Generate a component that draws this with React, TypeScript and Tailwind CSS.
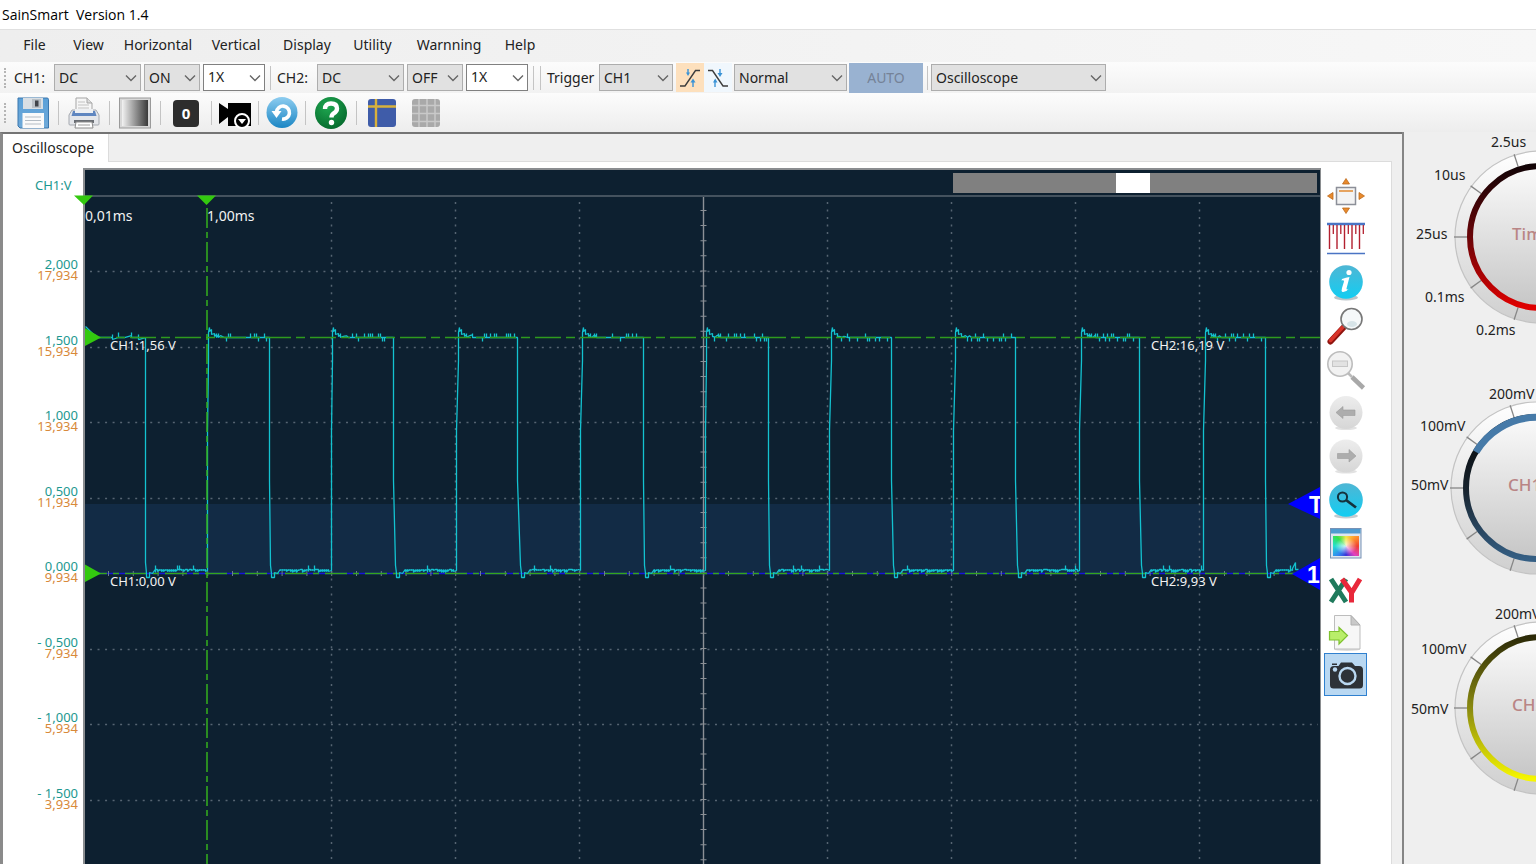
import React from 'react';

const MENU = [
  { label: 'File', width: 'w-[47px]' },
  { label: 'View', width: 'w-[61px]' },
  { label: 'Horizontal', width: 'w-[78px]' },
  { label: 'Vertical', width: 'w-[78px]' },
  { label: 'Display', width: 'w-[64px]' },
  { label: 'Utility', width: 'w-[67px]' },
  { label: 'Warnning', width: 'w-[86px]' },
  { label: 'Help', width: 'w-[56px]' },
];

// ---- toolbar parts ----

const Grip: React.FC = () => (
  <div className="mr-2 h-5 w-0 shrink-0 border-l-2 border-dotted border-[#b5b5b5]"></div>
);

const Separator: React.FC = () => <div className="h-6 w-px shrink-0 bg-[#c4c4c4]"></div>;

interface ComboProps {
  label: string;
  value: string;
  width: string;
  light?: boolean;
}

const Combo: React.FC<ComboProps> = ({ label, value, width, light }) => (
  <div className={`relative h-[27px] shrink-0 ${width}`}>
    <select
      aria-label={label}
      className={`h-full w-full appearance-none border pl-1 text-sm leading-5 text-[#222] ${
        light ? 'border-[#808080] bg-white pb-0.5' : 'border-[#adadad] bg-[#e1e1e1]'
      }`}
    >
      <option>{value}</option>
    </select>
    <svg className="pointer-events-none absolute top-2.5 right-1 h-2 w-3" viewBox="0 0 12 8" fill="none">
      <path d="M1 1.5 L6 6.5 L11 1.5" stroke="#666" strokeWidth="1.4" />
    </svg>
  </div>
);

const SlopeUpIcon: React.FC = () => (
  <svg className="h-6 w-6" viewBox="0 0 24 24" fill="none">
    <path d="M2 20 H7 L17.500 4.500 H22" stroke="#3d3d3d" strokeWidth="1.400" />
    <path d="M10 3 V8 M15 14 V21" stroke="#3a93d6" strokeWidth="1.400" />
    <path d="M8 6.500 H12 L10 10 Z M12.500 16.500 H17.500 L15 12.500 Z" fill="#3a93d6" />
  </svg>
);

const SlopeDownIcon: React.FC = () => (
  <svg className="h-6 w-6" viewBox="0 0 24 24" fill="none">
    <path d="M2 4.500 H6.500 L17 20 H22" stroke="#3d3d3d" strokeWidth="1.400" />
    <path d="M14 3 V8 M9 14 V21" stroke="#3a93d6" strokeWidth="1.400" />
    <path d="M11.500 7 H16.500 L14 11 Z M7 16.500 H11.500 L9.200 12.500 Z" fill="#3a93d6" />
  </svg>
);

const SaveIcon: React.FC = () => (
  <svg className="h-8 w-8" viewBox="0 0 32 32">
    <defs>
      <linearGradient id="save" x1="0" y1="0" x2="0" y2="1">
        <stop offset="0" stopColor="#5aa0d8" />
        <stop offset="1" stopColor="#6fa9d8" />
      </linearGradient>
    </defs>
    <path d="M1 1 H30 Q31.500 1 31.500 2.500 V31 H3 L1 29 Z" fill="url(#save)" stroke="#3a76ad" strokeWidth="1" />
    <rect x="6" y="1" width="20" height="11" fill="#d9dfe4" />
    <rect x="15" y="2" width="9" height="9" fill="#b9c0c6" />
    <rect x="18" y="3.500" width="3.500" height="6" fill="#40444a" />
    <rect x="5.500" y="16" width="21.500" height="15" fill="#fafafa" />
    <path d="M8 20 H24 M8 23.500 H24 M8 27 H24" stroke="#b4bcc4" strokeWidth="1.200" />
  </svg>
);

const PrintIcon: React.FC = () => (
  <svg className="h-8 w-8" viewBox="0 0 32 32">
    <path d="M8 15 V1 H19 L24 6 V15 Z" fill="#f6f6f6" stroke="#a5a5a5" />
    <path d="M10 5 H17 M10 8 H21 M10 11 H21" stroke="#c2c2c2" />
    <path d="M19 1 V6 H24" fill="#dcdcdc" stroke="#a5a5a5" />
    <path d="M4 13 H28 L31 18 V27 Q31 28 30 28 H2 Q1 28 1 27 V18 Z" fill="#e4e6ea" stroke="#a4a8af" />
    <path d="M5 14 H27 L28.500 19 H3.500 Z" fill="#5f86c0" />
    <path d="M7 16 H25 V12 H7 Z" fill="#eef0f3" />
    <rect x="6" y="23" width="20" height="3" fill="#6a6e74" />
    <path d="M8 25 H24 L25 31 H7 Z" fill="#fff" stroke="#8c8c8c" />
    <path d="M10 28 H22" stroke="#9c9c9c" />
  </svg>
);

const GradientIcon: React.FC = () => (
  <svg className="h-8 w-8" viewBox="0 0 32 32">
    <defs>
      <linearGradient id="grey">
        <stop offset="0" stopColor="#f2f2f2" />
        <stop offset="1" stopColor="#3a3a3a" />
      </linearGradient>
    </defs>
    <rect x="0.500" y="1" width="31" height="30" fill="#d8d8d8" stroke="#9a9a9a" />
    <rect x="3" y="3" width="26" height="26" fill="url(#grey)" />
  </svg>
);

const ZeroIcon: React.FC = () => (
  <svg className="h-8 w-8" viewBox="0 0 32 32">
    <rect x="3" y="3" width="26" height="27" rx="4" fill="#2d2d2d" />
    <text x="16" y="22" textAnchor="middle" fontSize="15" fontWeight="700" fill="#fff" fontFamily="Noto Sans, sans-serif">
      0
    </text>
  </svg>
);

const VideoIcon: React.FC = () => (
  <svg className="h-8 w-8" viewBox="0 0 32 32">
    <path d="M0 6 L9 12 V6 H32 V29 H9 V20 L0 27 Z" fill="#000" />
    <circle cx="23" cy="24" r="7" fill="#000" stroke="#fff" strokeWidth="2" />
    <path d="M19 22 H27 L23 27 Z" fill="#fff" />
  </svg>
);

const UndoIcon: React.FC = () => (
  <svg className="h-8 w-8" viewBox="0 0 32 32">
    <defs>
      <linearGradient id="undo" x1="0" y1="0" x2="0" y2="1">
        <stop offset="0" stopColor="#8ecdf0" />
        <stop offset="1" stopColor="#1b86c4" />
      </linearGradient>
    </defs>
    <circle cx="16" cy="15.500" r="15.500" fill="url(#undo)" />
    <path d="M10.500 15 A6.500 6.500 0 1 1 16 22" fill="none" stroke="#fff" strokeWidth="3.600" />
    <path d="M5.500 14 H15.500 L10.500 21 Z" fill="#fff" />
  </svg>
);

const HelpIcon: React.FC = () => (
  <svg className="h-8 w-8" viewBox="0 0 32 32">
    <defs>
      <radialGradient id="help" cx="0.4" cy="0.3" r="0.8">
        <stop offset="0" stopColor="#1fa851" />
        <stop offset="1" stopColor="#04652a" />
      </radialGradient>
    </defs>
    <circle cx="16" cy="16" r="16" fill="url(#help)" />
    <path
      d="M10 12 Q10 6.500 16 6.500 Q22 6.500 22 11.500 Q22 14.500 18.500 16.500 Q16.500 17.800 16.500 20.500"
      fill="none"
      stroke="#fff"
      strokeWidth="4.400"
    />
    <circle cx="16.500" cy="25.500" r="2.700" fill="#fff" />
  </svg>
);

const CursorGridIcon: React.FC = () => (
  <svg className="h-8 w-8" viewBox="0 0 32 32">
    <rect x="2" y="2" width="28" height="28" rx="3" fill="#3f5ca9" />
    <path d="M2 9.500 H30 M10 2 V30" stroke="#d8b13c" strokeWidth="2.400" />
  </svg>
);

const GreyGridIcon: React.FC = () => (
  <svg className="h-8 w-8" viewBox="0 0 32 32">
    <rect x="2" y="2" width="28" height="28" rx="3" fill="#a9a9a9" />
    <path d="M2 8.500 H30 M2 16.500 H30 M2 24.500 H30 M9 2 V30 M17 2 V30 M25 2 V30" stroke="#c9c9c9" strokeWidth="1.500" />
  </svg>
);

const TOOLS: { name: string; icon: React.ReactNode; margin: string; sep: boolean }[] = [
  { name: 'Save', icon: <SaveIcon />, margin: 'ml-[3px] mr-[9px]', sep: true },
  { name: 'Print', icon: <PrintIcon />, margin: 'mx-[9px]', sep: true },
  { name: 'Background', icon: <GradientIcon />, margin: 'mx-[9px]', sep: true },
  { name: 'Zero', icon: <ZeroIcon />, margin: 'mx-[9px]', sep: true },
  { name: 'Record', icon: <VideoIcon />, margin: 'mx-[7px]', sep: true },
  { name: 'Undo', icon: <UndoIcon />, margin: 'mx-[7px]', sep: true },
  { name: 'Help topics', icon: <HelpIcon />, margin: 'mx-[9px]', sep: true },
  { name: 'Cursors', icon: <CursorGridIcon />, margin: 'mx-[9px]', sep: false },
  { name: 'Grid', icon: <GreyGridIcon />, margin: 'ml-[3px]', sep: false },
];

// ---- side tools, every icon is drawn on a 40x40 field ----

const SIDE_TOOLS: { name: string; art: React.ReactNode }[] = [
  {
    name: 'Fit',
    art: (
      <>
        <rect x="10.500" y="11.500" width="19" height="17" fill="#f3f3f3" stroke="#8c8f98" strokeWidth="1.500" />
        <path d="M13 15 H27" stroke="#e59a4e" strokeWidth="1.800" />
        <path
          d="M20 2.500 L23.500 8 H16.500 Z M20 37.500 L23.500 32 H16.500 Z M1.500 20 L7 16.500 V23.500 Z M38.500 20 L33 16.500 V23.500 Z"
          fill="#e88a2c"
          stroke="#bd6a1c"
          strokeWidth="0.800"
        />
      </>
    ),
  },
  {
    name: 'Ruler',
    art: (
      <>
        <path d="M1 4 H39" stroke="#4a74c4" strokeWidth="2.400" />
        <path d="M1 33.500 H39" stroke="#4a74c4" strokeWidth="1.400" />
        <path d="M3.500 5 V29 M11 5 V29 M18.500 5 V29 M26 5 V29 M33.500 5 V29" stroke="#b3202f" strokeWidth="1.400" />
        <path d="M7.300 5 V14 M14.800 5 V14 M22.300 5 V14 M29.800 5 V14 M37.300 5 V14" stroke="#b3202f" strokeWidth="1.300" />
      </>
    ),
  },
  {
    name: 'Info',
    art: (
      <>
        <ellipse cx="20" cy="34.500" rx="12" ry="3" fill="#bcc4c8" />
        <circle cx="20" cy="19" r="16.800" fill="url(#aqua)" />
        <circle cx="23" cy="9.500" r="2.600" fill="#fff" />
        <path
          d="M16 16 Q20 14.500 23.500 14 L20.500 25.500 Q20.500 27.500 23 25.500 Q20 29.500 16.500 29 Q15 28 16 25 L18 18.500 Q18 16.500 15.500 17.500 Z"
          fill="#fff"
        />
      </>
    ),
  },
  {
    name: 'Zoom in',
    art: (
      <>
        <path d="M17.500 20.500 L4.500 34.500" stroke="#8f1510" strokeWidth="6" strokeLinecap="round" />
        <path d="M16.500 20.500 L4.500 33.500" stroke="#d9342a" strokeWidth="3.500" strokeLinecap="round" />
        <circle cx="25.500" cy="12" r="10.500" fill="#f5f8f9" stroke="#777" strokeWidth="1.600" />
        <ellipse cx="26" cy="17" rx="5" ry="3" fill="#d7e4e8" />
      </>
    ),
  },
  {
    name: 'Zoom out',
    art: (
      <>
        <path d="M22 23 L26 27" stroke="#bbb" strokeWidth="2.500" />
        <path d="M26 27 L37.500 38" stroke="#a8a8a8" strokeWidth="4.500" />
        <circle cx="14" cy="14" r="12.200" fill="#f2f2f2" stroke="#bdbdbd" strokeWidth="1.600" />
        <rect x="6.500" y="11" width="15" height="5.500" fill="#e2e2e2" stroke="#c6c6c6" />
      </>
    ),
  },
  {
    name: 'Back',
    art: (
      <>
        <ellipse cx="20" cy="34" rx="11" ry="2" fill="#e2e2e2" />
        <circle cx="20" cy="18.500" r="16.500" fill="url(#disc)" />
        <path d="M10 18.500 L17 12.500 V16 H29 V21.500 H17 V24.500 Z" fill="#adadad" stroke="#9c9c9c" strokeWidth="0.600" />
      </>
    ),
  },
  {
    name: 'Forward',
    art: (
      <>
        <ellipse cx="20" cy="34.500" rx="11" ry="2" fill="#e2e2e2" />
        <circle cx="20" cy="19" r="16.500" fill="url(#disc)" />
        <path d="M30 19 L23 12.500 V16.500 H11.500 V21.500 H23 V25 Z" fill="#adadad" stroke="#9c9c9c" strokeWidth="0.600" />
      </>
    ),
  },
  {
    name: 'Search',
    art: (
      <>
        <ellipse cx="20" cy="35" rx="12" ry="2.500" fill="#c4ccd0" />
        <circle cx="20" cy="19" r="16.800" fill="url(#aqua)" />
        <circle cx="16.500" cy="16" r="4.600" fill="none" stroke="#15323c" strokeWidth="2" />
        <path d="M20 19 L30 26.500" stroke="#15323c" strokeWidth="2.800" />
      </>
    ),
  },
  {
    name: 'Colors',
    art: (
      <>
        <rect x="4.500" y="4.500" width="30.500" height="29.500" fill="#dfe6ef" stroke="#7792b5" />
        <rect x="5" y="5" width="29.500" height="4.500" fill="#4f9bd0" />
        <foreignObject x="7" y="12" width="26" height="20">
          <div className="h-5 w-[26px] bg-[radial-gradient(#ffffffcc,#ffffff00_60%),conic-gradient(#f6e84a,#ff9a2e,#f0402e,#e040c0,#3a35d8,#2f8cf0,#25e0d0,#35e04a,#f6e84a)]"></div>
        </foreignObject>
      </>
    ),
  },
  {
    name: 'XY mode',
    art: (
      <>
        <path d="M5 11 L20 34 M20 11 L5 34" stroke="#1f7a5c" strokeWidth="5" />
        <path d="M16 11 L26 25 M34 11 L25.500 25 M25.500 23 V34.500" fill="none" stroke="#e8283a" strokeWidth="5" />
      </>
    ),
  },
  {
    name: 'Export',
    art: (
      <>
        <ellipse cx="21" cy="38.500" rx="13" ry="1.500" fill="#dcdcdc" />
        <path d="M8.500 4.500 H25 L34 14 V38 H8.500 Z" fill="#f7f7f7" stroke="#bdbdbd" />
        <path d="M25 4.500 V14 H34 Z" fill="#c9c9c9" stroke="#b0b0b0" />
        <path d="M3.500 20.500 H13 V16.500 L21.500 24.500 L13 33 V29 H3.500 Z" fill="#b9ee6a" stroke="#7fc22f" strokeWidth="1.200" />
      </>
    ),
  },
  {
    name: 'Snapshot',
    art: (
      <>
        <path
          d="M8 11 H12.500 L15 7.500 H26 L29 11 H33 Q37 11 37 15 V30 Q37 33.500 33.500 33.500 H7.500 Q4 33.500 4 30 V15 Q4 11 8 11 Z"
          fill="#2d3238"
        />
        <path d="M6 8.500 H11 V10 H6 Z" fill="#2d3238" />
        <circle cx="9" cy="14.500" r="2.200" fill="#b9d8f2" />
        <circle cx="21.500" cy="21" r="8" fill="none" stroke="#b9d8f2" strokeWidth="2.400" />
      </>
    ),
  },
];

// ---- scope trace ----

// x of the low and the high end of each rising edge, then of each falling edge
const PULSES = [
  [207, 208, 269, 271],
  [331, 332, 393, 396],
  [456, 458, 517, 521],
  [580, 582, 643, 645],
  [705, 706, 768, 770],
  [829, 831, 891, 894],
  [953, 955, 1015, 1018],
  [1079, 1081, 1139, 1142],
  [1203, 1205, 1265, 1267],
];

const HIGH = 337;
const LOW = 570;

const noise = (n: number) => {
  const v = Math.sin(n * 12.9898) * 43758.5453;
  return v - Math.floor(v);
};

const highPart = (from: number, to: number) => {
  let d = `L${from} 332 L${from + 1} 327 V331 L${from + 3} 329 V334 L${from + 6} 333 V336`;
  for (let x = from + 8; x < to - 1; x += 2) {
    const n = noise(x);
    const y = x < from + 16 ? HIGH - 3 * n : HIGH;
    d += ` L${x} ${y}`;
    if (n > 0.76) d += ` V${HIGH - 4} V${HIGH}`;
    if (n < 0.2) d += ` V${HIGH + 4} V${HIGH}`;
  }
  return `${d} L${to} ${HIGH}`;
};

const lowPart = (from: number, to: number) => {
  let d = `L${from} 573 V577 H${from + 3} V572 L${from + 6} 573 L${from + 8} 570`;
  for (let x = from + 9; x < to - 1; x += 2) {
    d += ` L${x} 569 V${569 + Math.round(noise(x) * 3)}`;
    if (noise(x + 1) > 0.93) d += ' V565 V569';
  }
  return `${d} L${to} ${LOW}`;
};

const buildTrace = () => {
  let d = `M85 326 L92 333 L98 337 H112 V334 V339 L118 337 V332 V337 H124 L131 335 V332 V337 H138 V334 V339 L145 337 L145 562 ${lowPart(146, 207)}`;
  PULSES.forEach(([riseLow, riseHigh, fallHigh, fallLow], i) => {
    const next = PULSES[i + 1];
    d += ` L${riseLow} 430 L${riseHigh} 360 ${highPart(riseHigh, fallHigh)} L${fallHigh} 480 L${fallLow - 1} 565 `;
    d += lowPart(fallLow, next ? next[0] : 1292);
  });
  return `${d} V568 L1295 562 V569 H1298`;
};

const TRACE = buildTrace();

const ROWS = [
  { y: 271, ch1: '2,000', ch2: '17,934' },
  { y: 347, ch1: '1,500', ch2: '15,934' },
  { y: 422, ch1: '1,000', ch2: '13,934' },
  { y: 498, ch1: '0,500', ch2: '11,934' },
  { y: 573, ch1: '0,000', ch2: '9,934' },
  { y: 649, ch1: '- 0,500', ch2: '7,934' },
  { y: 724, ch1: '- 1,000', ch2: '5,934' },
  { y: 800, ch1: '- 1,500', ch2: '3,934' },
  { y: 875, ch1: '- 2,000', ch2: '1,934' },
];

const COLUMNS = [331, 455, 579, 827, 951, 1075, 1199];

const Scope: React.FC = () => (
  <svg
    className="block h-full w-full"
    viewBox="3 162 1318 702"
    preserveAspectRatio="xMinYMin slice"
    fontFamily="Noto Sans, sans-serif"
    fontSize="13"
  >
    <rect x="83" y="168" width="1238" height="700" fill="#8a8d90" />
    <rect x="85" y="170" width="1235" height="700" fill="#0d2030" />
    <rect x="85" y="504" width="1235" height="69" fill="#122b45" />

    <rect x="953" y="173" width="364" height="20" fill="#808080" />
    <rect x="1116" y="173" width="34" height="20" fill="#fff" />
    <path d="M85 196 H1320" stroke="#7c848c" />

    <g stroke="#566472" strokeWidth="1.500" strokeDasharray="2 5.530">
      {ROWS.filter((row) => row.y !== 573).map((row) => (
        <path key={row.y} d={`M90 ${row.y + 0.5} H1318`} />
      ))}
      {COLUMNS.map((x) => (
        <path key={x} d={`M${x + 0.5} 202 V868`} />
      ))}
    </g>

    <path d="M703.500 197 V868" stroke="#8b9096" strokeWidth="1.400" />
    <path d="M703.500 210 V868" stroke="#8b9096" strokeWidth="6" strokeDasharray="1 14.100" />

    <path d="M85 573.500 H1318" stroke="#1616d8" strokeWidth="1.500" />
    <path d="M108 573.500 H1318" stroke="#6d7f8c" strokeWidth="5" strokeDasharray="1 23.800" />
    <path d="M85 573.500 H1318" stroke="#35a51c" strokeWidth="1.500" strokeDasharray="22 6 6 6" />

    <path d={TRACE} transform="translate(0.5 0.5)" fill="none" stroke="#13c2d0" strokeWidth="1.300" strokeLinejoin="bevel" />
    <path d="M85 337.500 H1320" stroke="#2f9a1e" strokeWidth="1.300" strokeDasharray="26 5 9 5" />
    <path d="M207 208 V868" stroke="#35b01c" strokeWidth="1.500" strokeDasharray="20 4 6 4" />

    <g fill="#33c90f">
      <path d="M74 195.500 H93 L84 205 Z M197 195.500 H216 L206.500 205 Z" />
      <path d="M85 328 L101 337.500 L85 346 Z M85 564.500 L101 573.500 L85 582 Z" />
    </g>

    <path d="M1288 504 L1320 487 V519 Z M1292 574 L1320 558 V590 Z" fill="#0000ff" />
    <svg x="1288" y="480" width="32" height="120" viewBox="1288 480 32 120">
      <g fill="#fff" fontSize="23" fontWeight="700" fontFamily="Liberation Sans, sans-serif">
        <text x="1309" y="513">T</text>
        <text x="1307" y="583">1</text>
      </g>
    </svg>

    <g fill="#f2f2f2">
      <text x="85" y="221" fontSize="14">0,01ms</text>
      <text x="207" y="221" fontSize="14">1,00ms</text>
      <text x="110" y="350">CH1:1,56 V</text>
      <text x="110" y="586">CH1:0,00 V</text>
      <text x="1151" y="350">CH2:16,19 V</text>
      <text x="1151" y="586">CH2:9,93 V</text>
    </g>

    <text x="35" y="190" fill="#1c9890">CH1:V</text>
    <g textAnchor="end">
      {ROWS.map((row) => (
        <g key={row.ch1}>
          <text x="78" y={row.y - 2} fill="#1c9890">{row.ch1}</text>
          <text x="78" y={row.y + 9} fill="#d8893a">{row.ch2}</text>
        </g>
      ))}
    </g>
  </svg>
);

// ---- knobs ----

interface KnobProps {
  id: string;
  cx: number;
  title: string;
  stops: string[];
  labels: { text: string; x: number; y: number }[];
  split?: boolean;
}

const TICKS = [0, 36, 72, 108, 144, 180, 216, 252, 288, 324];

const Knob: React.FC<KnobProps> = ({ id, cx, title, stops, labels, split }) => (
  <svg className="block h-[215px] w-[220px] shrink-0" viewBox="0 5 220 215" fontFamily="Noto Sans, sans-serif" fontSize="14">
    <defs>
      <linearGradient id={`${id}-ring`} x1="0" y1="0" x2="0" y2="1">
        <stop offset="0" stopColor={stops[0]} />
        <stop offset="0.5" stopColor={stops[1]} />
        <stop offset="1" stopColor={stops[2]} />
      </linearGradient>
    </defs>
    <circle cx={cx} cy="110" r="86" fill="url(#rim)" stroke="#c3c3c3" strokeWidth="1.200" />
    {TICKS.map((a) => (
      <path key={a} d={`M${cx - 87} 110 h13`} transform={`rotate(${a} ${cx} 110)`} stroke="#868686" strokeWidth="1.300" />
    ))}
    <circle cx={cx} cy="110" r="71" fill="url(#face)" stroke={`url(#${id}-ring)`} strokeWidth="6" />
    {split && (
      <>
        <path d={`M${cx - 61} 74 A71 71 0 0 1 ${cx + 61} 74`} fill="none" stroke="#467aa8" strokeWidth="7" />
        <circle cx={cx + 6} cy="63" r="7" fill="#b5b8bb" />
      </>
    )}
    <text x={cx - 29} y="113" fontSize="17" fontWeight="500" fill="#b98585">{title}</text>
    <g fill="#222">
      {labels.map((l) => (
        <text key={l.text} x={l.x} y={l.y}>{l.text}</text>
      ))}
    </g>
  </svg>
);

const SharedGradients: React.FC = () => (
  <svg className="absolute h-0 w-0" aria-hidden="true">
    <defs>
      <linearGradient id="rim" x1="0" y1="0" x2="0" y2="1">
        <stop offset="0" stopColor="#ffffff" />
        <stop offset="1" stopColor="#cfcfcf" />
      </linearGradient>
      <linearGradient id="face" x1="0" y1="0" x2="0" y2="1">
        <stop offset="0" stopColor="#fafafa" />
        <stop offset="1" stopColor="#c6c6c6" />
      </linearGradient>
      <linearGradient id="disc" x1="0" y1="0" x2="0" y2="1">
        <stop offset="0" stopColor="#ededed" />
        <stop offset="1" stopColor="#d6d6d6" />
      </linearGradient>
      <linearGradient id="aqua" x1="0" y1="0" x2="0" y2="1">
        <stop offset="0" stopColor="#4fb6d4" />
        <stop offset="1" stopColor="#12cdf2" />
      </linearGradient>
    </defs>
  </svg>
);

const App: React.FC = () => (
  <div className="flex h-screen flex-col overflow-hidden bg-[#efefef] font-['Noto_Sans',sans-serif] text-sm leading-5 text-[#222]">
    <SharedGradients />
    <header className="h-[29px] shrink-0 bg-white pt-[5px] pl-0.5 font-['Open_Sans',sans-serif] text-sm leading-5 whitespace-pre text-black">
      SainSmart  Version 1.4
    </header>

    <nav className="flex h-[33px] shrink-0 items-center border-t border-[#e0e0e0] bg-gradient-to-r from-[#eeeeee] to-[#f7f7f7] pb-0.5 pl-[11px]">
      {MENU.map((item) => (
        <button key={item.label} className={`shrink-0 text-center ${item.width}`}>
          {item.label}
        </button>
      ))}
    </nav>

    <div className="flex h-[31px] shrink-0 items-center bg-gradient-to-b from-[#fcfcfc] to-[#f2f2f2] pl-1">
      <Grip />
      <span className="w-10">CH1:</span>
      <div className="flex gap-[3px]">
        <Combo label="CH1 coupling" value="DC" width="w-[87px]" />
        <Combo label="CH1 state" value="ON" width="w-[56px]" />
        <Combo label="CH1 probe" value="1X" width="w-[62px]" light />
      </div>
      <div className="flex items-center pr-1.5 pl-[5px]">
        <Separator />
      </div>
      <span className="w-10">CH2:</span>
      <div className="flex gap-[3px]">
        <Combo label="CH2 coupling" value="DC" width="w-[87px]" />
        <Combo label="CH2 state" value="OFF" width="w-[56px]" />
        <Combo label="CH2 probe" value="1X" width="w-[62px]" light />
      </div>
      <div className="flex items-center gap-1.5 pr-1.5 pl-[5px]">
        <Separator />
        <Separator />
      </div>
      <span className="w-[52px]">Trigger</span>
      <Combo label="Trigger source" value="CH1" width="w-[74px]" />
      <button aria-label="Rising edge" className="ml-[3px] flex h-[29px] w-7 items-center justify-center bg-[#fde0bd]">
        <SlopeUpIcon />
      </button>
      <button aria-label="Falling edge" className="mr-0.5 flex h-[29px] w-7 items-center justify-center bg-[#f0f7fd]">
        <SlopeDownIcon />
      </button>
      <Combo label="Trigger mode" value="Normal" width="w-[113px]" />
      <button className="mr-1 ml-0.5 h-[30px] w-[74px] bg-[#99b2d1] text-[#758297]">AUTO</button>
      <Separator />
      <div className="ml-[3px]">
        <Combo label="Instrument" value="Oscilloscope" width="w-[175px]" />
      </div>
    </div>

    <div className="flex h-[39px] shrink-0 items-center bg-gradient-to-b from-[#fcfcfc] to-[#ededed] pl-1">
      <Grip />
      {TOOLS.map((tool) => (
        <React.Fragment key={tool.name}>
          <button aria-label={tool.name} className={tool.margin}>
            {tool.icon}
          </button>
          {tool.sep && <Separator />}
        </React.Fragment>
      ))}
    </div>

    <div className="flex min-h-0 flex-1">
      <main className="flex min-w-0 flex-1 flex-col border-t-2 border-l-[3px] border-t-[#747474] border-l-[#8a8a8a]">
        <div className="flex h-7 shrink-0">
          <button className="border-r border-[#dcdcdc] bg-white pr-3.5 pl-[9px]">Oscilloscope</button>
          <div className="mr-2.5 flex-1 border-b border-[#dcdcdc]"></div>
        </div>
        <div className="mr-2.5 flex min-h-0 flex-1 border-r border-[#dcdcdc] bg-white">
          <div className="min-w-0 flex-1">
            <Scope />
          </div>
          <div className="w-[70px] shrink-0 pt-3 pl-[3px]">
            {SIDE_TOOLS.map((tool) => (
              <button
                key={tool.name}
                aria-label={tool.name}
                className="flex w-[43px] items-center justify-center odd:h-[44px] even:h-[43px] last:border last:border-[#2f80cf] last:bg-[#b9d8f2]"
              >
                <svg className="h-10 w-10 shrink-0" viewBox="0 0 40 40">
                  {tool.art}
                </svg>
              </button>
            ))}
          </div>
        </div>
      </main>

      <aside className="flex w-[134px] shrink-0 flex-col overflow-hidden border-l-2 border-[#858585] bg-[#efefef]">
        <div className="mb-9">
          <Knob
            id="time"
            cx={137}
            title="Time"
            stops={['#120406', '#6a0508', '#e00000']}
            labels={[
              { text: '2.5us', x: 87, y: 20 },
              { text: '10us', x: 30, y: 53 },
              { text: '25us', x: 12, y: 112 },
              { text: '0.1ms', x: 21, y: 175 },
              { text: '0.2ms', x: 72, y: 208 },
            ]}
          />
        </div>
        <div className="mb-[5px]">
          <Knob
            id="ch1"
            cx={133}
            title="CH1"
            split
            stops={['#050607', '#17222c', '#355f84']}
            labels={[
              { text: '200mV', x: 85, y: 21 },
              { text: '100mV', x: 16, y: 53 },
              { text: '50mV', x: 7, y: 112 },
            ]}
          />
        </div>
        <Knob
          id="ch2"
          cx={137}
          title="CH2"
          stops={['#2c2a08', '#8a8a10', '#f6f600']}
          labels={[
            { text: '200mV', x: 91, y: 21 },
            { text: '100mV', x: 17, y: 56 },
            { text: '50mV', x: 7, y: 116 },
          ]}
        />
      </aside>
    </div>
  </div>
);

export default App;
